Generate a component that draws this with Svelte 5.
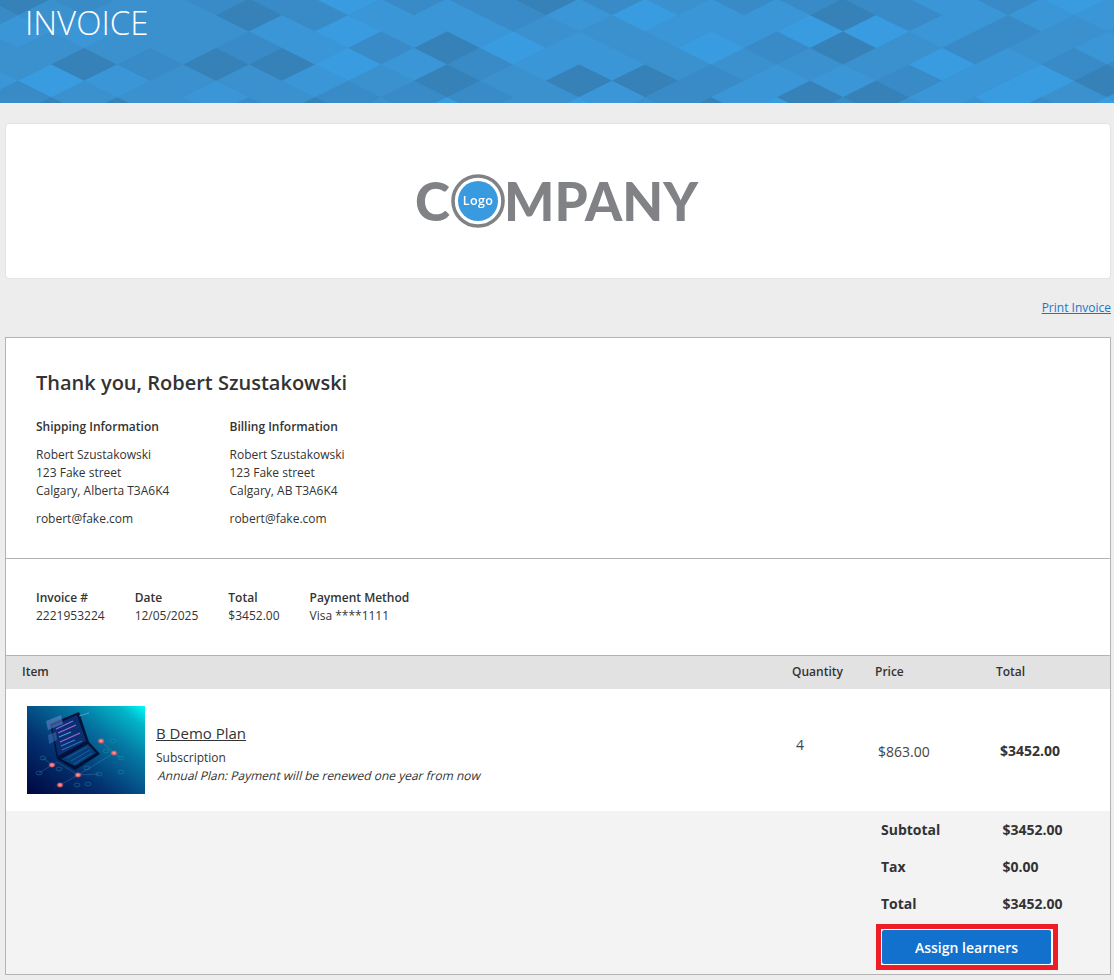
<script>
  // banner pattern: one string per row of diamonds, each char is a shade
  const rows = [
    'dm0mmlmmdm0mmmbmlb',
    'm000dmbbmblbbdmbbb',
    'bb00blbb00bbllbm00',
    '0000mbmdlb0lmd0m0b',
    '0dmddlbmbb0000lbmm',
    'blb00b0d0ddmbbmbld',
    'm00b0mmm0bmbddbl0b',
    '0dd0md0l0l0dlm00ml'
  ];
  const shades = { '0': '#3a91ce', d: '#3681b8', m: '#388bc6', b: '#3a96d6', l: '#399ce0' };

  const diamonds = [];
  rows.forEach((row, r) => {
    const y = -1.2 + 16.4 * r;
    [...row].forEach((c, i) => {
      if (c === '0') return;
      const x = (r % 2 ? -15 : 18) + 66 * i;
      diamonds.push({
        points: `${x - 33},${y} ${x},${y - 16.4} ${x + 33},${y} ${x},${y + 16.4}`,
        fill: shades[c]
      });
    });
  });

  const addresses = [
    { title: 'Shipping Information', lines: ['Robert Szustakowski', '123 Fake street', 'Calgary, Alberta T3A6K4'], email: 'robert@fake.com' },
    { title: 'Billing Information', lines: ['Robert Szustakowski', '123 Fake street', 'Calgary, AB T3A6K4'], email: 'robert@fake.com' }
  ];

  const details = [
    { label: 'Invoice #', value: '2221953224' },
    { label: 'Date', value: '12/05/2025' },
    { label: 'Total', value: '$3452.00' },
    { label: 'Payment Method', value: 'Visa ****1111' }
  ];

  const totals = [
    { label: 'Subtotal', value: '$3452.00' },
    { label: 'Tax', value: '$0.00' },
    { label: 'Total', value: '$3452.00' }
  ];

  const hotNodes = [[74, 35], [87, 47], [25, 59], [51, 69], [33, 79]];
  const coldNodes = [[86, 35], [79, 45], [94, 52], [94, 66], [60, 62], [72, 68], [16, 52], [12, 67], [61, 78], [32, 63], [50, 79]];
</script>

<header class="banner">
  <svg class="pattern" width="1114" height="103" viewBox="0 0 1114 103" aria-hidden="true">
    <rect width="1114" height="103" fill="#3a91ce" />
    {#each diamonds as d}
      <polygon points={d.points} fill={d.fill} />
    {/each}
  </svg>
  <h1>INVOICE</h1>
</header>

<section class="logo-card">
  <svg width="300" height="70" viewBox="0 0 300 70" role="img" aria-label="Company logo">
    <g class="logo-art">
      <text x="7" y="54.5" class="logo-word">C</text>
      <text x="96" y="54.5" class="logo-word">MPANY</text>
      <circle cx="70" cy="35" r="25" fill="#fff" stroke="#808285" stroke-width="3.6" />
      <circle cx="70" cy="35" r="20" fill="#3a9ae0" />
      <text x="70" y="39" class="logo-small" text-anchor="middle">Logo</text>
    </g>
  </svg>
</section>

<div class="print-row"><a href="#print">Print Invoice</a></div>

<main class="invoice">
  <section class="thanks">
    <h2>Thank you, Robert Szustakowski</h2>
    <div class="addresses">
      {#each addresses as a}
        <div class="address">
          <h3>{a.title}</h3>
          <p>{#each a.lines as line}{line}<br />{/each}</p>
          <p>{a.email}</p>
        </div>
      {/each}
    </div>
  </section>

  <section class="details">
    {#each details as d}
      <div>
        <strong>{d.label}</strong>
        <span>{d.value}</span>
      </div>
    {/each}
  </section>

  <div class="table-head">
    <span>Item</span>
    <span>Quantity</span>
    <span>Price</span>
    <span>Total</span>
  </div>

  <div class="table-row">
    <div class="item">
      <svg class="thumb" width="118" height="88" viewBox="0 0 118 88" aria-hidden="true">
        <defs>
          <linearGradient id="thumbBg" x1="0" y1="1" x2="1" y2="0">
            <stop offset="0" stop-color="#00063f" />
            <stop offset="0.35" stop-color="#03306f" />
            <stop offset="0.68" stop-color="#0578a3" />
            <stop offset="0.88" stop-color="#03b4c8" />
            <stop offset="1" stop-color="#00fbfb" />
          </linearGradient>
          <radialGradient id="hotGlow">
            <stop offset="0" stop-color="#ffb8a0" />
            <stop offset="0.5" stop-color="#f0606a" />
            <stop offset="1" stop-color="#f0606a" stop-opacity="0" />
          </radialGradient>
        </defs>
        <rect width="118" height="88" fill="url(#thumbBg)" />
        <g stroke="#6fc0c8" stroke-width="0.4" opacity="0.6" fill="none">
          <path d="M12 67 L30 56 L51 69 L87 47 M33 79 L51 69 M51 69 L72 68 M74 35 L87 47 L94 52 M16 52 L25 59" />
        </g>
        <polygon points="30,53 61,35 73,48 48,64" fill="#021035" />
        <polygon points="34,53 61,38 69,47 48,60" fill="#063c78" />
        <path d="M40 52 L60 41 M44 55 L63 44 M47 58 L65 47" stroke="#0f6fa8" stroke-width="0.8" />
        <polygon points="23,18 52,6 62,36 30,53" fill="#05123a" />
        <polygon points="25,20 50,9 59,35 31,50" fill="#0a2f70" />
        <g stroke-width="1.1" fill="none">
          <path d="M29 23 L46 15" stroke="#7f6fe0" />
          <path d="M31 27 L49 19" stroke="#b060d8" />
          <path d="M32 31 L44 26" stroke="#3fa0e0" />
          <path d="M33 36 L53 27" stroke="#b060d8" />
          <path d="M34 40 L48 34" stroke="#3c7fd0" />
          <path d="M35 44 L55 35" stroke="#2a70c0" />
        </g>
        <polygon points="19,15 34,9 36,18 21,24" fill="#6f8fd8" opacity="0.5" />
        <polygon points="21,29 29,26 30,34 22,38" fill="#4f7fc0" opacity="0.45" />
        <path d="M52 10 L62 7" stroke="#9fc8e8" stroke-width="0.7" opacity="0.7" />
        {#each coldNodes as [x, y]}
          <ellipse cx={x} cy={y} rx="3" ry="1.9" fill="none" stroke="#1f9fb8" stroke-width="0.5" opacity="0.75" />
        {/each}
        {#each hotNodes as [x, y]}
          <ellipse cx={x} cy={y} rx="3.8" ry="3" fill="url(#hotGlow)" />
        {/each}
      </svg>
      <div class="item-text">
        <a href="#plan">B Demo Plan</a>
        <p>Subscription</p>
        <p><span class="note">Annual Plan: Payment will be renewed one year from now</span></p>
      </div>
    </div>
    <div class="qty">4</div>
    <div class="price">$863.00</div>
    <div class="line-total">$3452.00</div>
  </div>

  <div class="summary">
    <div class="summary-inner">
      {#each totals as t}
        <div class="sum-row">
          <span>{t.label}</span>
          <span>{t.value}</span>
        </div>
      {/each}
      <div class="highlight">
        <button type="button">Assign learners</button>
      </div>
    </div>
  </div>
</main>

<style>
  :global(body) {
    background: #ededed;
    color: #333;
    font-family: 'Open Sans', 'Liberation Sans', sans-serif;
    font-size: 12px;
  }

  .banner {
    position: relative;
    height: 103px;
    overflow: hidden;
  }

  .pattern {
    position: absolute;
    inset: 0;
    display: block;
  }

  h1 {
    position: relative;
    margin: 0;
    padding-left: 25px;
    color: #fff;
    font-size: 33px;
    font-weight: 300;
    line-height: 46px;
  }

  .logo-card {
    display: flex;
    justify-content: center;
    align-items: center;
    height: 154px;
    margin: 20px 3px 0 5px;
    background: #fff;
    border: 1px solid #e3e3e3;
    border-radius: 4px;
  }

  .logo-art {
    filter: blur(0.5px);
  }

  .logo-word {
    fill: #808285;
    font-family: Lato, 'Open Sans', sans-serif;
    font-weight: 900;
    font-size: 53px;
  }

  .logo-small {
    fill: #fff;
    font-family: 'Open Sans', sans-serif;
    font-weight: 600;
    font-size: 12.5px;
    letter-spacing: 0.4px;
  }

  .print-row {
    display: flex;
    justify-content: flex-end;
    margin: 20px 3px 0 5px;
    line-height: 17px;
  }

  .print-row a {
    color: #1a76c9;
    font-size: 12px;
  }

  .invoice {
    margin: 21px 3px 0 5px;
    background: #fff;
    border: 1px solid #b3b3b3;
  }

  .thanks {
    height: 221px;
    box-sizing: border-box;
    padding: 31px 30px 0;
    border-bottom: 1px solid #b3b3b3;
  }

  h2 {
    margin: 0;
    font-size: 20px;
    font-weight: 600;
    line-height: 28px;
  }

  .addresses {
    display: flex;
    margin-top: 21px;
  }

  .address {
    width: 193.5px;
    line-height: 18px;
  }

  h3 {
    margin: 0 0 10px;
    font-size: 12px;
    font-weight: 600;
    line-height: 18px;
  }

  .address p {
    margin: 0 0 10px;
  }

  .details {
    display: flex;
    gap: 30px;
    height: 96px;
    box-sizing: border-box;
    padding: 30px 30px 0;
    line-height: 18px;
  }

  .details strong,
  .details span {
    display: block;
  }

  .details strong {
    font-weight: 600;
  }

  .table-head,
  .table-row {
    display: grid;
    grid-template-columns: 786px 83px 121px 1fr;
  }

  .table-head {
    height: 33px;
    box-sizing: content-box;
    align-items: center;
    background: #e2e2e2;
    border-top: 1px solid #b3b3b3;
    font-weight: 600;
  }

  .table-head span {
    padding-bottom: 2px;
  }

  .table-head span:first-child {
    padding-left: 16px;
  }

  .table-row {
    height: 122px;
    align-items: center;
  }

  .item {
    display: flex;
    align-items: center;
    gap: 11px;
    padding-left: 21px;
  }

  .thumb {
    display: block;
  }

  .item-text {
    padding-top: 6px;
  }

  .item-text a {
    color: #333;
    font-size: 15px;
    line-height: 22px;
  }

  .item-text p {
    margin: 0;
    line-height: 18px;
  }

  .item-text a + p {
    margin-top: 5px;
  }

  /* slanted regular face, the installed italic runs narrower than the reference */
  .note {
    display: inline-block;
    transform: skewX(-14deg);
    transform-origin: left bottom;
  }

  .qty {
    padding: 0 0 12px 4px;
    font-size: 14px;
    color: #444;
  }

  .price {
    padding: 2px 0 0 3px;
    font-size: 14px;
    color: #444;
  }

  .line-total {
    padding: 0 0 0 4px;
    font-size: 14px;
    font-weight: 700;
  }

  .summary {
    display: flex;
    justify-content: flex-end;
    height: 163px;
    box-sizing: border-box;
    background: #f3f3f3;
  }

  .summary-inner {
    width: 229px;
  }

  .sum-row {
    display: grid;
    grid-template-columns: 121.5px 1fr;
    height: 37px;
    align-items: center;
    font-size: 14px;
    font-weight: 700;
  }

  .highlight {
    width: 172px;
    margin: 2px 0 0 -5px;
    border: 5px solid #ee1c25;
    background: #fff;
  }

  button {
    display: block;
    width: 171px;
    height: 36px;
    margin: 0;
    padding: 0;
    border: 1px solid #fff;
    border-radius: 3px;
    background: #1271cc;
    color: #fff;
    font-family: inherit;
    font-size: 14px;
    font-weight: 600;
  }
</style>
